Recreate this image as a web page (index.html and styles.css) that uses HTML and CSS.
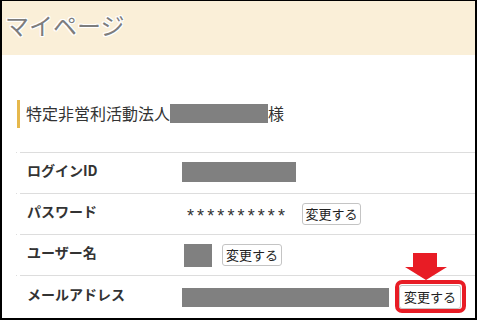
FILE: index.html
```html
<!DOCTYPE html>
<html lang="ja">
<head>
<meta charset="utf-8">
<title>マイページ</title>
<link rel="stylesheet" href="styles.css">
</head>
<body>
<div class="page">
  <header class="hdr"><h1 class="hdr-title">マイページ</h1></header>
  <main class="content">
    <h2 class="sec"><span>特定非営利活動法人</span><span class="mask mask-name"></span><span>様</span></h2>
    <div class="table">
      <div class="row">
        <div class="label">ログインID</div>
        <div class="value"><span class="mask mask-id"></span></div>
      </div>
      <div class="row">
        <div class="label">パスワード</div>
        <div class="value"><span class="stars">**********</span><button class="btn btn-pw">変更する</button></div>
      </div>
      <div class="row">
        <div class="label">ユーザー名</div>
        <div class="value"><span class="mask mask-user"></span><button class="btn">変更する</button></div>
      </div>
      <div class="row row-last">
        <div class="label">メールアドレス</div>
        <div class="value"><span class="mask mask-mail"></span><button class="btn btn-lg">変更する</button></div>
      </div>
    </div>
  </main>
  <div class="mark-box"></div>
  <svg class="mark-arrow" width="42" height="27" viewBox="0 0 42 27" aria-hidden="true">
    <path d="M8 0 H32 V14 H42 L21 27 L0 14 H8 Z" fill="#e81c25"/>
  </svg>
</div>
</body>
</html>
```

FILE: styles.css
```css
* { box-sizing: border-box; }
html, body { margin: 0; padding: 0; background: #fff; }
body { font-family: "Noto Sans CJK JP", "Noto Sans", sans-serif; color: #333; }

.page {
  position: relative;
  width: 477px;
  height: 320px;
  border: 2px solid #000;
  border-top-width: 1px;
  overflow: hidden;
  background: #fff;
}

.hdr {
  height: 54px;
  background: #faefd8;
}
.hdr-title {
  margin: 0;
  padding-left: 3px;
  font-size: 24px;
  font-weight: normal;
  line-height: 48px;
  color: #7d7d7d;
  text-shadow: 1px 0 0 #fff, -1px 0 0 #fff, 0 1px 0 #fff, 0 -1px 0 #fff,
               1px 1px 0 #fff, -1px -1px 0 #fff, 1px -1px 0 #fff, -1px 1px 0 #fff;
}

.content { padding-top: 45px; }

.sec {
  display: flex;
  align-items: center;
  margin: 0 0 0 15px;
  height: 28px;
  padding-left: 6px;
  border-left: 3px solid #e6b84c;
  font-size: 16px;
  font-weight: normal;
  line-height: 24px;
  color: #333;
}
.sec span { padding-bottom: 3px; }
.sec .mask-name { padding: 0; }

.mask { display: inline-block; background: #808080; flex: none; }
.mask-name { width: 98px; height: 19px; margin-bottom: 2px; }
.mask-id { width: 114px; height: 20px; margin-bottom: 3px; }
.mask-user { width: 28px; height: 23px; margin-left: 2px; }
.mask-mail { width: 207px; height: 19px; }

.table {
  margin: 24px 0 0 18px;
}
.row {
  position: relative;
  display: flex;
  align-items: center;
  height: 41px;
  border-top: 1px solid #dddddd;
}
.row::before {
  content: "";
  position: absolute;
  top: -1px;
  left: -4px;
  width: 1px;
  height: 1px;
  background: #dddddd;
}
.row-last { height: 43px; }

.label {
  width: 162px;
  padding-left: 7px;
  padding-bottom: 6px;
  font-size: 14px;
  font-weight: bold;
  line-height: 20px;
  color: #333;
}
.value {
  display: flex;
  align-items: center;
}

.stars {
  margin-left: 5px;
  padding-top: 4px;
  font-family: "Liberation Sans", sans-serif;
  font-size: 18px;
  line-height: 18px;
  letter-spacing: 3.1px;
  color: #333;
}

.btn {
  width: 60px;
  height: 22px;
  margin-left: 10px;
  padding: 0;
  border: 1px solid #c4c4c4;
  border-radius: 3px;
  background: #fff;
  font-family: "Noto Sans CJK JP", sans-serif;
  font-size: 13px;
  line-height: 18px;
  color: #222;
}
.btn-pw { width: 59px; margin-left: 14px; }
.btn-lg { width: 62px; height: 24px; margin-left: 10px; }

.mark-box {
  position: absolute;
  left: 393px;
  top: 279px;
  width: 71px;
  height: 33px;
  border: 4px solid #e81c25;
  border-radius: 7px;
}
.mark-arrow {
  position: absolute;
  left: 403px;
  top: 252px;
}
```
